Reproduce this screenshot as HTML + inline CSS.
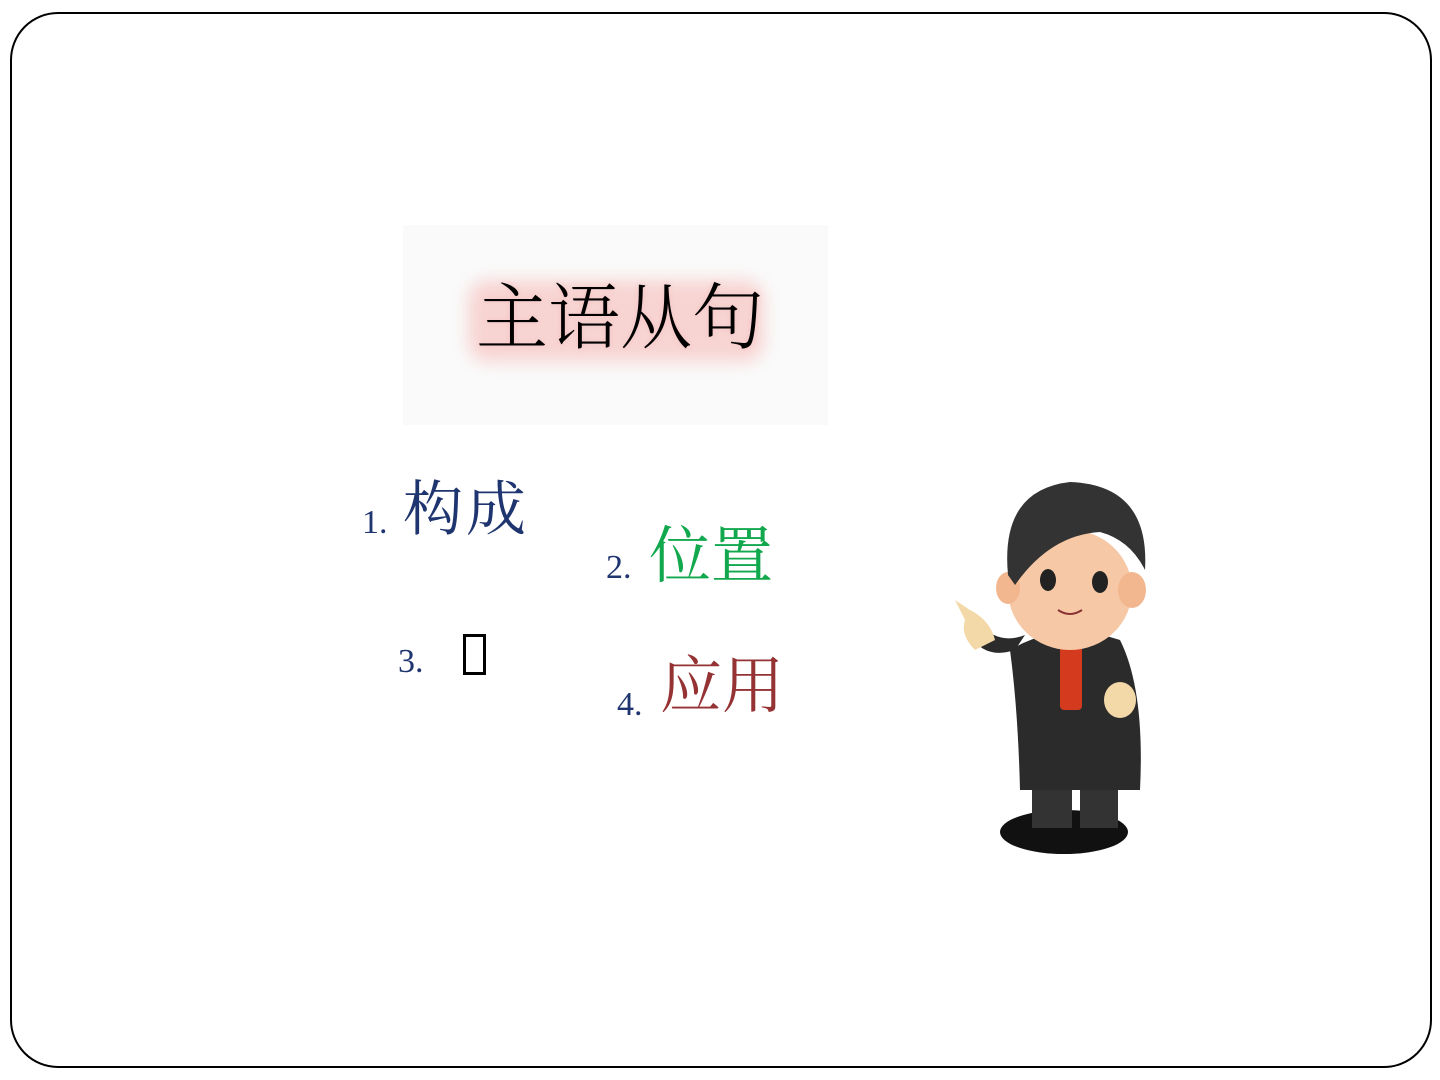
<!DOCTYPE html>
<html><head><meta charset="utf-8"><style>
body{margin:0;width:1440px;height:1080px;background:#fff;position:relative;overflow:hidden;font-family:"Liberation Serif","Noto Serif CJK SC",serif}
.frame{position:absolute;left:10px;top:12px;width:1418px;height:1052px;border:2px solid #000;border-radius:48px}
.t{position:absolute;white-space:nowrap;line-height:1}
</style></head><body>
<div class="frame"></div>
<div style="position:absolute;left:403px;top:225px;width:425px;height:200px;background:#fafafa"></div>
<div style="position:absolute;left:468px;top:280px;width:296px;height:82px;background:#f7d4d2;border-radius:20px;filter:blur(8px)"></div>
<div class="t" style="left:476px;top:283px;font-size:72px;color:#000;font-weight:300;letter-spacing:0px;text-shadow:0 0 6px #f4c0c0">主语从句</div>
<div class="t" style="left:362px;top:506px;font-size:34px;color:#1f3570">1.</div>
<div class="t" style="left:403px;top:480px;font-size:60px;color:#1f3570;letter-spacing:3px">构成</div>
<div class="t" style="left:606px;top:551px;font-size:34px;color:#1f3570">2.</div>
<div class="t" style="left:649px;top:526px;font-size:62px;color:#12a84e">位置</div>
<div class="t" style="left:398px;top:645px;font-size:34px;color:#1f3570">3.</div>
<div style="position:absolute;left:463px;top:634px;width:17px;height:35px;border:3px solid #000"></div>
<div class="t" style="left:617px;top:688px;font-size:34px;color:#1f3570">4.</div>
<div class="t" style="left:660px;top:656px;font-size:62px;color:#953233">应用</div>
<svg style="position:absolute;left:940px;top:460px" width="280" height="410" viewBox="0 0 280 410">
<ellipse cx="124" cy="372" rx="64" ry="22" fill="#111"/>
<rect x="92" y="320" width="40" height="48" fill="#333"/>
<rect x="140" y="320" width="38" height="48" fill="#333"/>
<path d="M70 190 Q120 160 180 180 Q205 230 200 330 L80 330 Q78 250 70 190Z" fill="#2b2b2b"/>
<path d="M75 190 Q45 200 30 175 L40 165 Q60 185 85 175Z" fill="#2b2b2b"/>
<rect x="120" y="180" width="22" height="70" fill="#d33a1e" rx="4"/>
<ellipse cx="180" cy="240" rx="16" ry="18" fill="#f4d9a8"/>
<path d="M15 140 L30 150 Q50 160 55 180 L35 190 Q20 175 25 160Z" fill="#f4d9a8"/>
<ellipse cx="130" cy="130" rx="62" ry="60" fill="#f7c8a5"/>
<ellipse cx="68" cy="128" rx="12" ry="16" fill="#f3b78f"/>
<ellipse cx="192" cy="130" rx="14" ry="18" fill="#f3b78f"/>
<path d="M68 115 Q60 30 130 22 Q210 25 205 110 Q190 80 160 72 Q110 75 75 125Z" fill="#333"/>
<ellipse cx="108" cy="120" rx="8" ry="11" fill="#222"/>
<ellipse cx="160" cy="122" rx="8" ry="11" fill="#222"/>
<path d="M118 150 Q130 158 142 150" stroke="#833" stroke-width="2" fill="none"/>
</svg>
</body></html>
